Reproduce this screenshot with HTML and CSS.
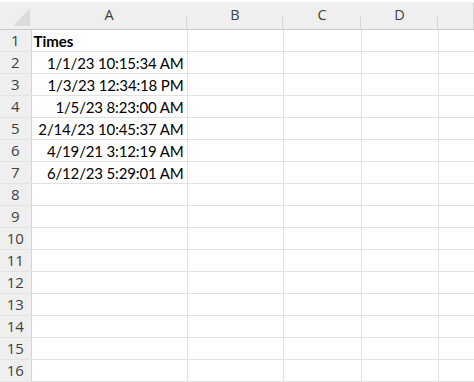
FILE: index.html
```html
<!DOCTYPE html>
<html lang="en">
<head>
  <meta charset="UTF-8">
  <title>Times</title>
  <link rel="stylesheet" href="styles.css">
</head>
<body>
  <div class="sheet">
    <table class="grid">
      <colgroup>
        <col class="col-rowhead">
        <col class="col-a">
        <col class="col-b">
        <col class="col-c">
        <col class="col-d">
        <col class="col-e">
      </colgroup>
      <thead>
        <tr>
          <th class="corner">
            <svg width="31" height="26" viewBox="0 0 31 26"><polygon points="13,24 30,24 30,6" fill="#dcdcdc"/></svg>
          </th>
          <th>A</th>
          <th>B</th>
          <th>C</th>
          <th>D</th>
          <th class="last"></th>
        </tr>
      </thead>
      <tbody>
        <tr><th>1</th><td class="bold">Times</td><td></td><td></td><td></td><td></td></tr>
        <tr><th>2</th><td class="num">1/1/23 10:15:34 AM</td><td></td><td></td><td></td><td></td></tr>
        <tr><th>3</th><td class="num">1/3/23 12:34:18 PM</td><td></td><td></td><td></td><td></td></tr>
        <tr><th>4</th><td class="num">1/5/23 8:23:00 AM</td><td></td><td></td><td></td><td></td></tr>
        <tr><th>5</th><td class="num">2/14/23 10:45:37 AM</td><td></td><td></td><td></td><td></td></tr>
        <tr><th>6</th><td class="num">4/19/21 3:12:19 AM</td><td></td><td></td><td></td><td></td></tr>
        <tr><th>7</th><td class="num">6/12/23 5:29:01 AM</td><td></td><td></td><td></td><td></td></tr>
        <tr><th>8</th><td></td><td></td><td></td><td></td><td></td></tr>
        <tr><th>9</th><td></td><td></td><td></td><td></td><td></td></tr>
        <tr><th>10</th><td></td><td></td><td></td><td></td><td></td></tr>
        <tr><th>11</th><td></td><td></td><td></td><td></td><td></td></tr>
        <tr><th>12</th><td></td><td></td><td></td><td></td><td></td></tr>
        <tr><th>13</th><td></td><td></td><td></td><td></td><td></td></tr>
        <tr><th>14</th><td></td><td></td><td></td><td></td><td></td></tr>
        <tr><th>15</th><td></td><td></td><td></td><td></td><td></td></tr>
        <tr><th>16</th><td></td><td></td><td></td><td></td><td></td></tr>
      </tbody>
    </table>
  </div>
</body>
</html>
```

FILE: styles.css
```css
body {
  margin: 0;
  background: #ffffff;
  font-family: 'Lato', 'Liberation Sans', sans-serif;
  color: #000;
  overflow: hidden;
}

.sheet {
  padding-top: 2px;
  width: 474px;
}

.grid {
  border-collapse: collapse;
  table-layout: fixed;
  width: 474px;
}

.grid tr {
  height: 22px;
}

.grid thead tr {
  height: 27px;
}

.col-rowhead { width: 31px; }
.col-a { width: 156px; }
.col-b { width: 96px; }
.col-c { width: 78px; }
.col-d { width: 77px; }
.col-e { width: 36px; }

.grid th,
.grid td {
  box-sizing: border-box;
  line-height: 16px;
}

/* Column headers */
.grid thead th {
  padding: 0;
  font-family: 'Open Sans', 'Noto Sans', sans-serif;
  font-weight: normal;
  font-size: 14.5px;
  color: #3f3f3f;
  text-align: center;
  background: linear-gradient(#d6d6d6, #d6d6d6) right bottom / 1px 13px no-repeat, #efefef;
  border-bottom: 1px solid #c8c8c8;
}

.grid thead th.corner {
  background: #efefef;
  line-height: 0;
  vertical-align: top;
}

.grid thead th.last {
  background: linear-gradient(#d6d6d6, #d6d6d6) right bottom / 1px 26px no-repeat, #efefef;
}

/* Row headers */
.grid tbody th {
  padding: 0;
  font-family: 'Open Sans', 'Noto Sans', sans-serif;
  font-weight: normal;
  font-size: 15px;
  color: #3f3f3f;
  text-align: center;
  background: #efefef;
  border-right: 1px solid #d4d4d4;
  border-bottom: 1px solid #e3e3e3;
}

/* Cells */
.grid td {
  padding: 0 3px 2px 2px;
  font-size: 15px;
  letter-spacing: -0.15px;
  vertical-align: bottom;
  white-space: nowrap;
  overflow: hidden;
  border-right: 1px solid #e1e1e1;
  border-bottom: 1px solid #e1e1e1;
}

.grid td.bold {
  font-weight: bold;
  letter-spacing: 0;
}

.grid td.num {
  text-align: right;
}
```
